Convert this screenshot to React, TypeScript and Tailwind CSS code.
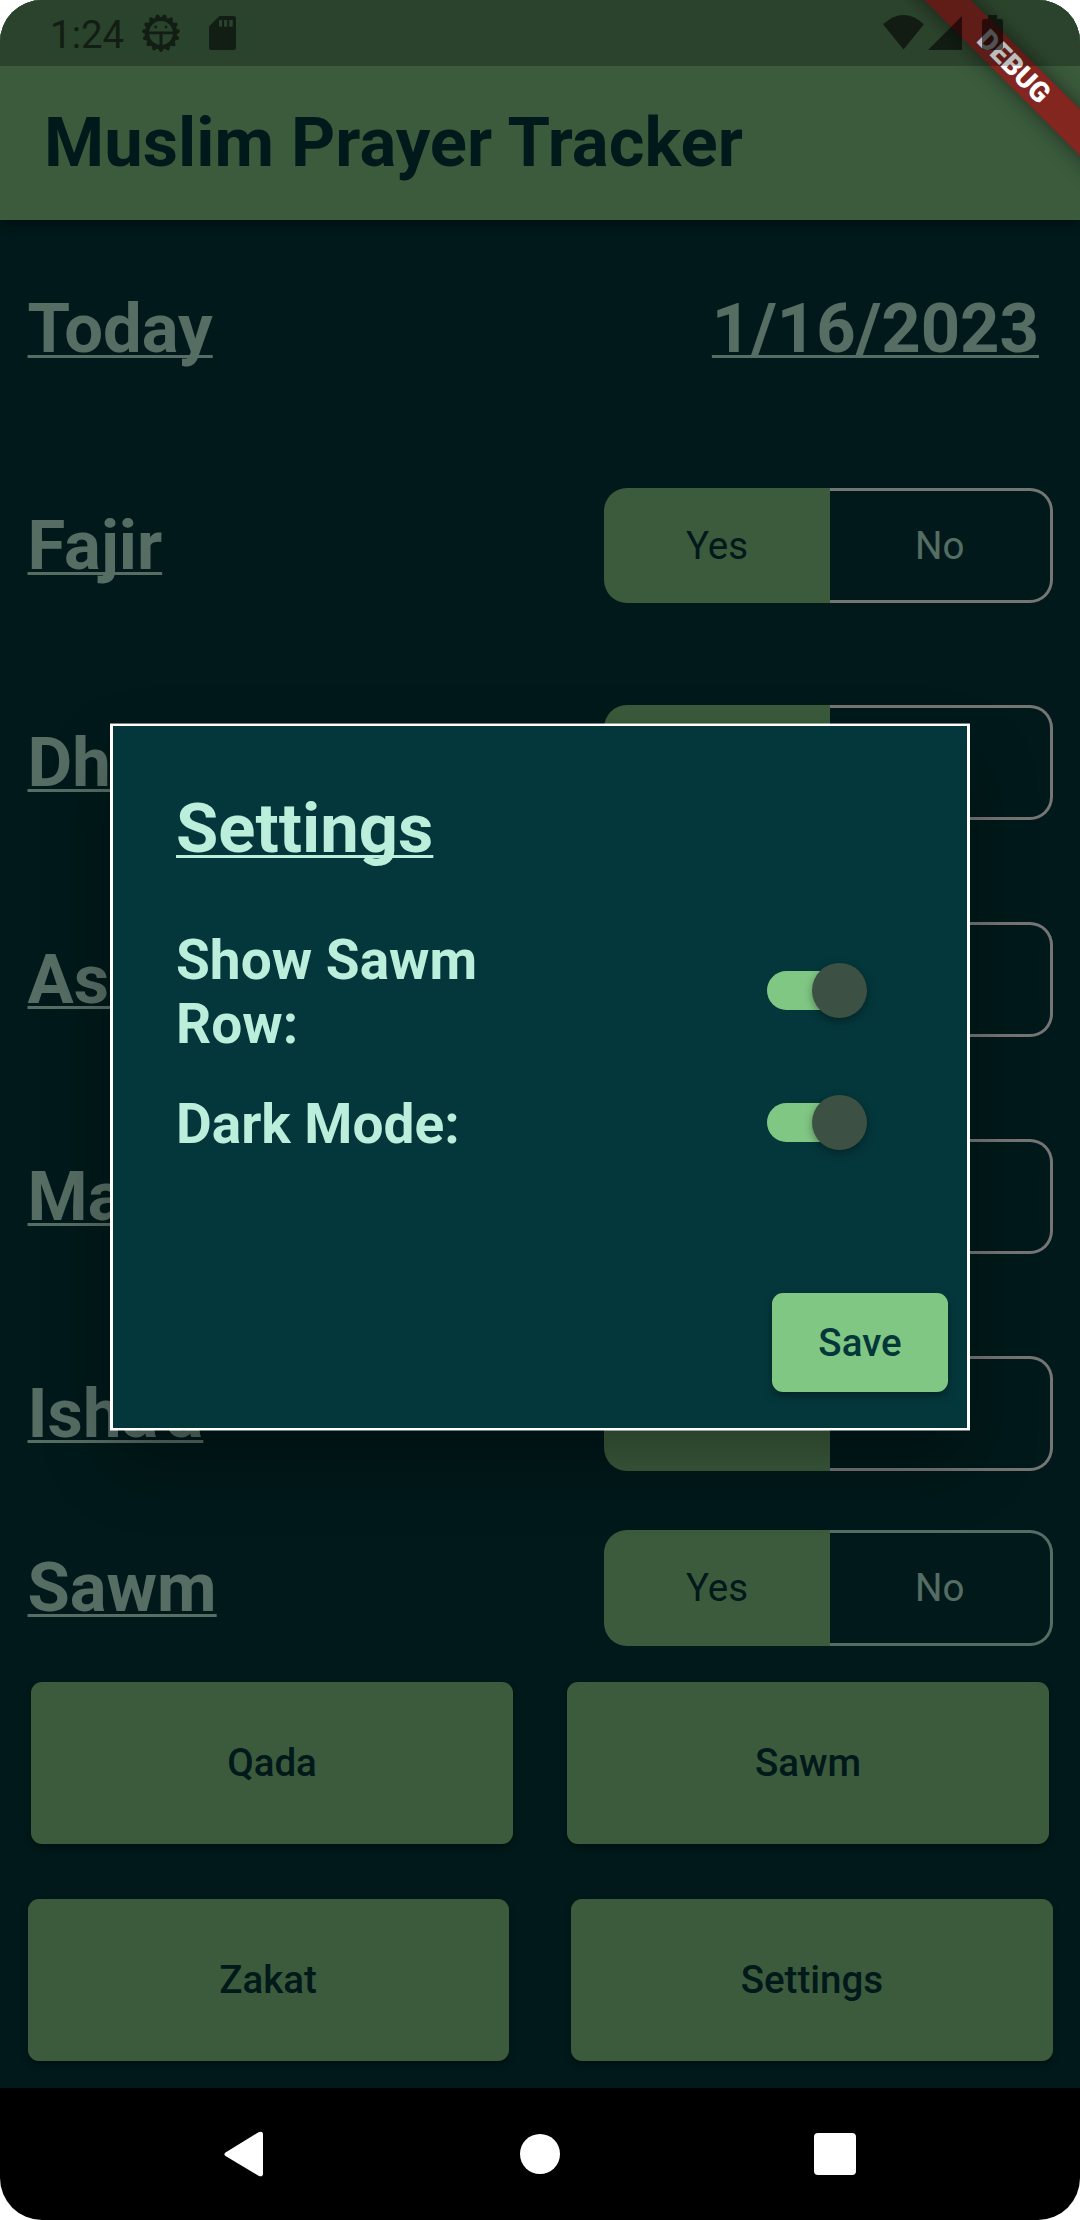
import React from "react";

const gearTeeth = Array.from({ length: 15 }, (_, i) => i * 24);

function GearIcon() {
  return (
    <svg width="40" height="40" viewBox="-20 -20 40 40">
      <circle r="14" fill="none" stroke="black" strokeWidth="4.2" />
      {gearTeeth.map((a) => (
        <path
          key={a}
          d="M-3 15 L-1.6 18 Q0 20 1.6 18 L3 15 Z"
          fill="black"
          transform={`rotate(${a})`}
        />
      ))}
      <path d="M-13 -1.6 H13 V1.2 H1.5 V13 H-1.5 V1.2 H-13 Z" fill="black" />
      <circle cx="-5.3" cy="-6" r="1.4" fill="black" />
      <circle cx="5" cy="-6" r="1.4" fill="black" />
    </svg>
  );
}

function StatusBar() {
  return (
    <div className="absolute inset-x-0 top-0 z-30 flex h-[66px] items-start bg-black/26">
      <div className="flex h-full w-full items-start justify-between opacity-57">
        <div className="flex items-start pl-[50px]">
          <span className="mt-[12px] w-[91px] text-[38.5px] leading-[45px] text-black">1:24</span>
          <div className="mt-[13px]">
            <GearIcon />
          </div>
          <svg className="mt-[16px] ml-[28px]" width="27" height="34" viewBox="0 0 27 34">
            <path
              fillRule="evenodd"
              fill="black"
              d="M10.5 0 H24.5 Q27 0 27 2.5 V31.5 Q27 34 24.5 34 H2.5 Q0 34 0 31.5 V10.5 Z M10 4 V10.7 H13 V4 Z M15 4 V10.7 H18.3 V4 Z M20.3 4 V10.7 H23.7 V4 Z"
            />
          </svg>
        </div>
        <div className="flex items-start pt-[15px] pr-[77px]">
          <svg width="41" height="35" viewBox="0 0 41 35">
            <path fill="black" d="M0 9.3 Q20.5 -9.3 41 9.3 L20.5 34.5 Z" />
          </svg>
          <svg className="ml-[4px]" width="34" height="35" viewBox="0 0 34 35">
            <path fill="black" d="M0 35 L34 1 V35 Z" />
          </svg>
          <svg className="ml-[20px]" width="21" height="35" viewBox="0 0 21 35">
            <path
              fill="black"
              d="M6 0 H15 V4 H18.5 Q21 4 21 6.5 V32.5 Q21 35 18.5 35 H2.5 Q0 35 0 32.5 V6.5 Q0 4 2.5 4 H6 Z"
            />
          </svg>
        </div>
      </div>
    </div>
  );
}

function DebugRibbon() {
  return (
    <div className="absolute inset-x-0 top-0 z-20 h-[220px] overflow-hidden">
      <div className="absolute top-[49.5px] left-[864px] flex h-[33px] w-[300px] rotate-45 items-center justify-center bg-[#82261f] text-[28px] leading-[33px] font-black text-white shadow-[0_0_20px_rgba(0,0,0,0.5)]">
        DEBUG
      </div>
    </div>
  );
}

function Heading({ children }: { children: React.ReactNode }) {
  return (
    <span className="block text-[68.75px] leading-[80px] font-bold text-[#bbeedb] underline decoration-[3.4px] underline-offset-[3px] [text-decoration-skip-ink:none]">
      {children}
    </span>
  );
}

function YesNo({ sawm = false }: { sawm?: boolean }) {
  return (
    <div
      className={
        sawm
          ? "flex h-[116px] w-[448.5px] text-[38.5px]"
          : "flex h-[115px] w-[448.5px] text-[38.5px]"
      }
    >
      <div className="flex w-[226px] items-center justify-center rounded-l-[23px] bg-[#81c784] text-[#03373a]">
        Yes
      </div>
      <div
        className={
          sawm
            ? "flex flex-1 items-center justify-center rounded-r-[23px] border-y-3 border-r-3 border-[#bbeedb] text-[#bbeedb]"
            : "flex flex-1 items-center justify-center rounded-r-[23px] border-y-3 border-r-3 border-white text-[#bbeedb]"
        }
      >
        No
      </div>
    </div>
  );
}

const prayers = ["Fajir", "Dhuhr", "Asr", "Maghrib", "Isha'a"];

function ActionButton({ children }: { children: React.ReactNode }) {
  return (
    <button className="flex h-[162px] w-[481.25px] items-center justify-center rounded-[11px] bg-[#81c784] text-[38.5px] font-medium text-[#03373a] shadow-[0_4px_6px_rgba(0,0,0,0.3)]">
      {children}
    </button>
  );
}

function Toggle() {
  return (
    <div className="relative flex h-[132px] w-[91px] items-center">
      <div className="h-[39px] w-[91px] rounded-full bg-[#81c784]" />
      <div className="absolute top-[38.5px] left-[44.5px] size-[55px] rounded-full bg-[#3c5143] shadow-[0_3px_8px_rgba(0,0,0,0.35)]" />
    </div>
  );
}

function SettingsDialog() {
  return (
    <div className="absolute top-[723px] left-[110px] z-10 h-[708px] w-[860px] border-y border-white/45 shadow-[0_34px_66px_-4px_rgba(0,0,0,0.32)]">
      <div className="flex h-full flex-col border-x-[3px] border-y-2 border-white bg-[#04373b] pl-[63px]">
        <div className="mt-[63px] h-[80px]">
          <Heading>Settings</Heading>
        </div>
        <div className="mt-[55px] flex h-[132px] items-center justify-between pr-[109px] text-[55px] leading-[64.4px] font-bold text-[#bbeedb]">
          <span className="mt-[4px] w-[340px]">Show Sawm Row:</span>
          <Toggle />
        </div>
        <div className="flex h-[132px] items-center justify-between pr-[109px] text-[55px] leading-[64.4px] font-bold text-[#bbeedb]">
          <span className="mt-[4px]">Dark Mode:</span>
          <Toggle />
        </div>
        <button className="mt-auto mr-[19px] mb-[36px] flex h-[99px] w-[176px] items-center justify-center self-end rounded-[11px] bg-[#81c784] text-[38.5px] font-medium text-[#03373a] shadow-[0_4px_8px_rgba(0,0,0,0.35)]">
          Save
        </button>
      </div>
    </div>
  );
}

export default function App() {
  return (
    <div className="relative flex h-[2220px] w-[1080px] flex-col overflow-hidden rounded-[42px] bg-black font-['Roboto',sans-serif]">
      <div className="flex h-[2088px] flex-col bg-[#03373a]">
        <header className="relative flex h-[220px] items-center bg-[#81c784] pt-[66px] pl-[44px] shadow-[0_4px_12px_rgba(0,0,0,0.4)]">
          <h1 className="text-[68.75px] leading-[80px] font-bold text-[#03373a]">Muslim Prayer Tracker</h1>
        </header>
        <div className="flex h-[217px] items-center justify-between pr-[41px] pl-[27.5px]">
          <Heading>Today</Heading>
          <Heading>1/16/2023</Heading>
        </div>
        {prayers.map((name) => (
          <div key={name} className="flex h-[217px] items-center justify-between pr-[27.5px] pl-[27.5px]">
            <Heading>{name}</Heading>
            <YesNo />
          </div>
        ))}
        <div className="flex h-[132px] items-center justify-between pr-[27.5px] pl-[27.5px]">
          <Heading>Sawm</Heading>
          <YesNo sawm />
        </div>
        <div className="flex h-[217px] items-center justify-between px-[31.4px]">
          <ActionButton>Qada</ActionButton>
          <ActionButton>Sawm</ActionButton>
        </div>
        <div className="flex h-[217px] items-center justify-between px-[27.5px]">
          <ActionButton>Zakat</ActionButton>
          <ActionButton>Settings</ActionButton>
        </div>
      </div>
      <nav className="flex h-[132px] items-center justify-between pr-[224px] pl-[224px]">
        <svg width="40" height="46" viewBox="0 0 40 46">
          <path fill="white" d="M1.5 21.5 Q-0.5 23.2 1.5 25 L34.5 44.8 Q39 46.5 39 42.5 V3.5 Q39 -0.5 34.5 1.2 Z" />
        </svg>
        <div className="ml-[2px] size-[40px] rounded-full bg-white" />
        <div className="size-[42px] rounded-[4px] bg-white" />
      </nav>
      <div className="absolute inset-x-0 top-0 h-[2088px] bg-black/54" />
      <SettingsDialog />
      <DebugRibbon />
      <StatusBar />
    </div>
  );
}
